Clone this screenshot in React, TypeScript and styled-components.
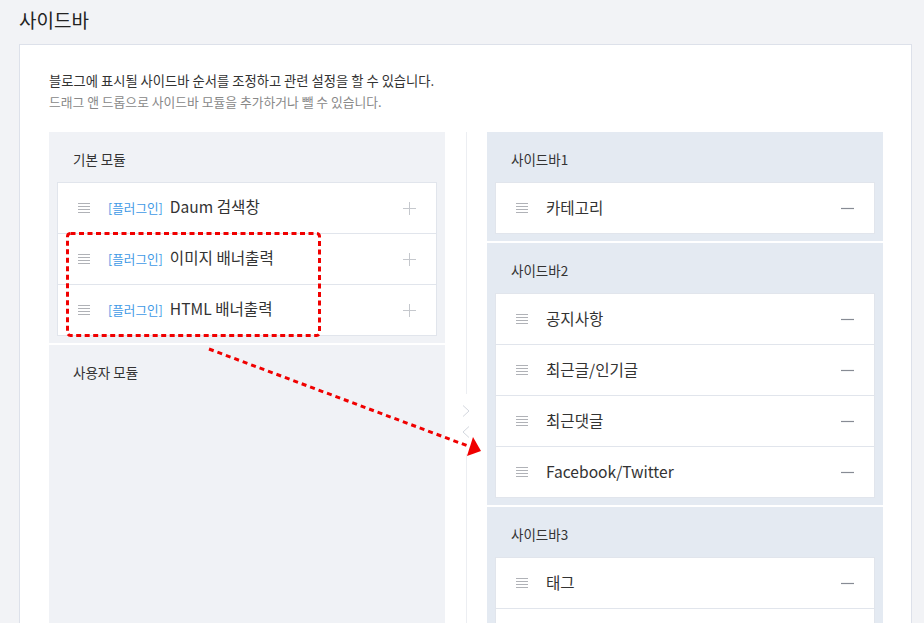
import styled, { createGlobalStyle } from 'styled-components';

const GlobalStyle = createGlobalStyle`
  html, body {
    margin: 0;
    padding: 0;
    background: #f2f3f6;
    overflow: hidden;
  }
  body {
    font-family: "Noto Sans CJK KR", "Noto Sans", sans-serif;
    color: #333;
  }
`;

const Page = styled.div`
  padding: 0 12px 0 19px;
`;

const Title = styled.h1`
  margin: 0 0 4px;
  height: 40px;
  line-height: 40px;
  font-size: 19px;
  font-weight: 400;
  color: #222;
`;

const Card = styled.div`
  background: #fff;
  border: 1px solid #dde1ea;
  padding: 25px 28px 0 29px;
  height: 700px;
`;

const Desc = styled.p<{ sub?: boolean }>`
  margin: 0;
  font-size: ${(p) => (p.sub ? '12.8px' : '13.3px')};
  line-height: 21px;
  color: ${(p) => (p.sub ? '#888' : '#333')};
`;

const Columns = styled.div`
  position: relative;
  margin-top: 20px;
  display: grid;
  grid-template-columns: 396px 42px 396px;
`;

const Stack = styled.div`
  display: flex;
  flex-direction: column;
  gap: 2px;
`;

const Section = styled.div<{ tone: 'gray' | 'blue'; fill?: boolean }>`
  background: ${(p) => (p.tone === 'blue' ? '#e4eaf2' : '#f0f2f6')};
  padding: 0 8px 7px;
  min-height: ${(p) => (p.fill ? '320px' : '0')};
`;

const SectionHead = styled.div`
  height: 50px;
  box-sizing: border-box;
  padding: 18px 0 0 16px;
  font-size: 13.5px;
  line-height: 18px;
  color: #333;
`;

const List = styled.ul`
  margin: 0;
  padding: 0;
  list-style: none;
  background: #fff;
  border: 1px solid #e1e5ec;
`;

const Row = styled.li`
  display: flex;
  align-items: center;
  height: 50px;
  padding: 0 20px;
  & + & {
    border-top: 1px solid #e1e5ec;
  }
`;

const Label = styled.span`
  flex: 1;
  font-size: 15.6px;
  line-height: 20px;
  margin-top: -2px;
  color: #333;
  white-space: nowrap;
`;

const Tag = styled.span`
  font-size: 12.6px;
  color: #3f9ae6;
  margin-right: 7px;
`;

const Grip = styled.svg`
  flex: none;
  margin-right: 18px;
`;

const Divider = styled.div`
  display: flex;
  flex-direction: column;
  align-items: center;
`;

const Line = styled.div<{ h: number }>`
  width: 1px;
  height: ${(p) => p.h}px;
  background: #eceef2;
`;

const Arrows = styled.div`
  display: flex;
  flex-direction: column;
  gap: 9px;
  padding: 11px 0 16px;
`;

const Overlay = styled.svg`
  position: absolute;
  left: 0;
  top: 0;
  pointer-events: none;
  overflow: visible;
`;

const GripIcon = () => (
  <Grip width="12" height="10" viewBox="0 0 12 10">
    {[0.5, 3.5, 6.5, 9.5].map((y) => (
      <line key={y} x1="0" y1={y} x2="12" y2={y} stroke="#b0b2b7" strokeWidth="1" />
    ))}
  </Grip>
);

const PlusIcon = () => (
  <svg width="13" height="13" viewBox="0 0 13 13">
    <path d="M6.5 0v13M0 6.5h13" stroke="#c5c8cd" strokeWidth="1" />
  </svg>
);

const MinusIcon = () => (
  <svg width="13" height="13" viewBox="0 0 13 13">
    <path d="M0 6.5h13" stroke="#878b94" strokeWidth="1.2" />
  </svg>
);

const Chevron = ({ dir }: { dir: 'left' | 'right' }) => (
  <svg width="8" height="12" viewBox="0 0 8 12">
    <path
      d={dir === 'right' ? 'M1 0.5l6 5.5-6 5.5' : 'M7 0.5l-6 5.5 6 5.5'}
      fill="none"
      stroke="#d3d7de"
      strokeWidth="1"
    />
  </svg>
);

const basic = ['Daum 검색창', '이미지 배너출력', 'HTML 배너출력'];

// the last row of 사이드바3 runs past the bottom of the frame, so it stays empty
const sidebars = [
  { name: '사이드바1', items: ['카테고리'] },
  { name: '사이드바2', items: ['공지사항', '최근글/인기글', '최근댓글', 'Facebook/Twitter'] },
  { name: '사이드바3', items: ['태그', ''] },
];

export default function App() {
  return (
    <>
      <GlobalStyle />
      <Page>
        <Title>사이드바</Title>
        <Card>
          <Desc>블로그에 표시될 사이드바 순서를 조정하고 관련 설정을 할 수 있습니다.</Desc>
          <Desc sub>드래그 앤 드롭으로 사이드바 모듈을 추가하거나 뺄 수 있습니다.</Desc>

          <Columns>
            <Stack>
              <Section tone="gray">
                <SectionHead>기본 모듈</SectionHead>
                <List>
                  {basic.map((name) => (
                    <Row key={name}>
                      <GripIcon />
                      <Label>
                        <Tag>[플러그인]</Tag>
                        {name}
                      </Label>
                      <PlusIcon />
                    </Row>
                  ))}
                </List>
              </Section>
              <Section tone="gray" fill>
                <SectionHead>사용자 모듈</SectionHead>
              </Section>
            </Stack>

            <Divider>
              <Line h={262} />
              <Arrows>
                <Chevron dir="right" />
                <Chevron dir="left" />
              </Arrows>
              <Line h={300} />
            </Divider>

            <Stack>
              {sidebars.map((sb) => (
                <Section key={sb.name} tone="blue">
                  <SectionHead>{sb.name}</SectionHead>
                  <List>
                    {sb.items.map((item, i) => (
                      <Row key={i}>
                        <GripIcon />
                        <Label>{item}</Label>
                        <MinusIcon />
                      </Row>
                    ))}
                  </List>
                </Section>
              ))}
            </Stack>

            <Overlay width="440" height="330">
              <rect
                x="18.5"
                y="101.5"
                width="252"
                height="102"
                rx="3"
                fill="none"
                stroke="#f00000"
                strokeWidth="3"
                strokeDasharray="5 3.5"
              />
              <line
                x1="160"
                y1="217"
                x2="419"
                y2="314"
                stroke="#f00000"
                strokeWidth="3"
                strokeDasharray="5 4"
              />
              <polygon points="424,305 418,324 432,319" fill="#f00000" />
            </Overlay>
          </Columns>
        </Card>
      </Page>
    </>
  );
}
